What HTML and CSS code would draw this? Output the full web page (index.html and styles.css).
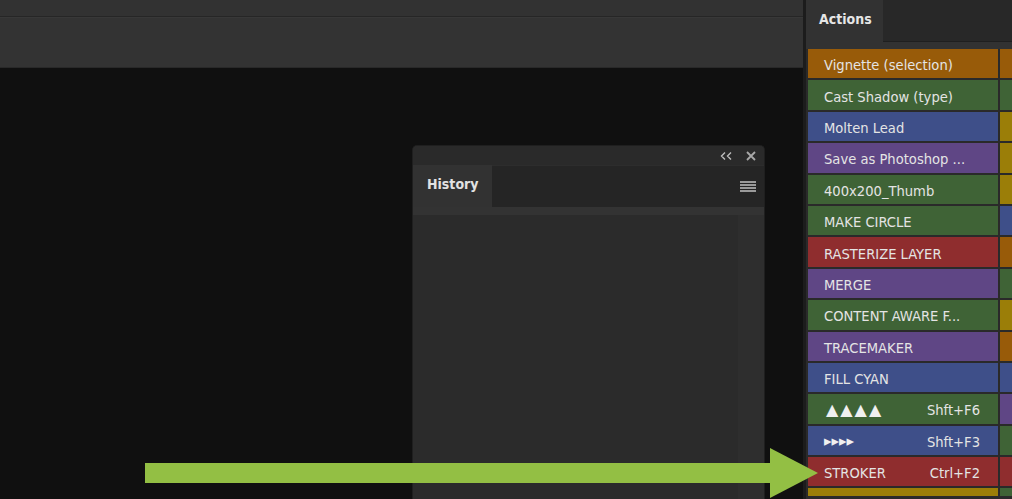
FILE: index.html
```html
<!DOCTYPE html>
<html>
<head>
<meta charset="utf-8">
<link rel="stylesheet" href="styles.css">
</head>
<body>
<div class="app">
  <div class="workspace">
    <div class="menubar"></div>
    <div class="optionsbar"></div>
    <div class="canvas">
      <div class="history">
        <div class="hist-head">
          <svg class="collapse" width="13" height="8" viewBox="0 0 13 8"><path d="M5 0.5 L1.5 4 L5 7.5 M11 0.5 L7.5 4 L11 7.5" stroke="#bdbdbd" stroke-width="1.4" fill="none"/></svg>
          <svg class="close" width="10" height="10" viewBox="0 0 10 10"><path d="M1 1 L9 9 M9 1 L1 9" stroke="#a8a8a8" stroke-width="1.8"/></svg>
        </div>
        <div class="hist-tabs">
          <div class="tab">History</div>
          <div class="tab-rest">
            <svg class="menu" width="16" height="12" viewBox="0 0 16 12"><path d="M0 1h16M0 4h16M0 7h16M0 10h16" stroke="#9a9a9a" stroke-width="2"/></svg>
          </div>
        </div>
        <div class="hist-strip"></div>
        <div class="hist-body">
          <div class="hist-list"></div>
          <div class="hist-scroll"></div>
        </div>
      </div>
    </div>
  </div>
  <div class="dock">
    <div class="dock-tabs">
      <div class="dtab">Actions</div>
      <div class="dtab-rest"></div>
    </div>
    <div class="dock-gap"></div>
    <div class="rows">
      <div class="row"><div class="cell orange">Vignette (selection)</div><div class="cell2 orange"></div></div>
      <div class="row"><div class="cell green">Cast Shadow (type)</div><div class="cell2 green"></div></div>
      <div class="row"><div class="cell blue">Molten Lead</div><div class="cell2 yellow"></div></div>
      <div class="row"><div class="cell purple">Save as Photoshop ...</div><div class="cell2 yellow"></div></div>
      <div class="row"><div class="cell green">400x200_Thumb</div><div class="cell2 yellow"></div></div>
      <div class="row"><div class="cell green">MAKE CIRCLE</div><div class="cell2 blue"></div></div>
      <div class="row"><div class="cell red">RASTERIZE LAYER</div><div class="cell2 orange"></div></div>
      <div class="row"><div class="cell purple">MERGE</div><div class="cell2 green"></div></div>
      <div class="row"><div class="cell green">CONTENT AWARE F...</div><div class="cell2 yellow"></div></div>
      <div class="row"><div class="cell purple">TRACEMAKER</div><div class="cell2 orange"></div></div>
      <div class="row"><div class="cell blue">FILL CYAN</div><div class="cell2 blue"></div></div>
      <div class="row"><div class="cell green"><span class="tri-up">▲▲▲▲</span><span class="key">Shft+F6</span></div><div class="cell2 purple"></div></div>
      <div class="row"><div class="cell blue"><span class="tri-right">▸▸▸▸</span><span class="key">Shft+F3</span></div><div class="cell2 green"></div></div>
      <div class="row"><div class="cell red">STROKER<span class="key">Ctrl+F2</span></div><div class="cell2 red"></div></div>
      <div class="row last"><div class="cell yellow"></div><div class="cell2 green"></div></div>
    </div>
  </div>
  <svg class="arrow" width="1012" height="499" viewBox="0 0 1012 499">
    <rect x="145" y="463" width="627" height="20" fill="#93bf44"/>
    <polygon points="770,448 818,473 770,498" fill="#93bf44"/>
  </svg>
</div>
</body>
</html>
```

FILE: styles.css
```css
* { box-sizing: border-box; }
html, body { margin: 0; padding: 0; }
body {
  width: 1012px;
  height: 499px;
  overflow: hidden;
  background: #101010;
  font-family: "DejaVu Sans Condensed", "DejaVu Sans", sans-serif;
}
.app {
  position: relative;
  display: flex;
  width: 1012px;
  height: 499px;
  overflow: hidden;
}
.workspace {
  width: 803px;
  display: flex;
  flex-direction: column;
}
.menubar {
  height: 17px;
  background: #323232;
  border-bottom: 1px solid #262626;
}
.optionsbar {
  height: 51px;
  background: #333333;
  border-top: 1px solid #383838;
  border-bottom: 1px solid #292929;
}
.canvas {
  flex: 1;
  position: relative;
  background: #101010;
}
.history {
  position: absolute;
  left: 412px;
  top: 77px;
  width: 353px;
  height: 354px;
  background: #2b2b2b;
  border: 1px solid #1f1f1f;
  border-bottom: none;
  border-radius: 5px 5px 0 0;
  display: flex;
  flex-direction: column;
  overflow: hidden;
}
.hist-head {
  height: 19px;
  background: #2a2a2a;
  display: flex;
  align-items: center;
  justify-content: flex-end;
  gap: 13px;
  padding-right: 8px;
}
.hist-tabs {
  height: 42px;
  display: flex;
}
.tab {
  width: 79px;
  background: #323232;
  color: #e2e2e2;
  font-weight: bold;
  font-size: 14px;
  padding-left: 14px;
  padding-bottom: 4px;
  display: flex;
  align-items: center;
}
.tab-rest {
  flex: 1;
  background: #252525;
  border-top: 1px solid #2d2d2d;
  display: flex;
  align-items: center;
  justify-content: flex-end;
  padding-right: 8px;
}
.hist-strip {
  height: 8px;
  background: #333333;
}
.hist-body {
  flex: 1;
  display: flex;
}
.hist-list {
  flex: 1;
  background: #2b2b2b;
}
.hist-scroll {
  width: 26px;
  background: #2e2e2e;
}
.dock {
  width: 209px;
  background: #2c2c2c;
  border-left: 3px solid #1c1c1c;
  display: flex;
  flex-direction: column;
  overflow: hidden;
}
.dock-tabs {
  height: 42px;
  display: flex;
  flex-shrink: 0;
}
.dtab {
  width: 77px;
  background: #323232;
  color: #e6e6e6;
  font-weight: bold;
  font-size: 14px;
  padding-left: 13px;
  display: flex;
  align-items: center;
  padding-bottom: 5px;
}
.dtab-rest {
  flex: 1;
  background: #282828;
  border-bottom: 1px solid #1f1f1f;
}
.dock-gap {
  height: 7px;
  background: #323232;
  flex-shrink: 0;
}
.rows {
  padding-left: 2px;
  background: #2a2a2a;
  flex: 1;
  min-height: 0;
  overflow: hidden;
}
.row {
  display: flex;
  height: 29.4px;
  margin-bottom: 2px;
}
.row.last { height: 8px; margin-bottom: 0; }
.cell {
  width: 190px;
  flex-shrink: 0;
  display: flex;
  align-items: center;
  padding: 2px 18px 0 16px;
  color: #e4e4e4;
  font-size: 14.6px;
  white-space: nowrap;
}
.cell2 {
  margin-left: 2px;
  width: 20px;
  flex-shrink: 0;
}
.key { margin-left: auto; }
.tri-up {
  font-family: "DejaVu Sans", sans-serif;
  font-size: 16px;
  letter-spacing: 2px;
  color: #f0f0f0;
  margin-left: 2px;
}
.tri-right {
  font-family: "DejaVu Sans", sans-serif;
  font-size: 15px;
  letter-spacing: 0;
  color: #f0f0f0;
}
.orange { background: #985b09; }
.green { background: #3f6336; }
.blue { background: #3e4f89; }
.purple { background: #5f4685; }
.red { background: #8f2d2e; }
.yellow { background: #9b7e08; }
.arrow {
  position: absolute;
  left: 0;
  top: 0;
  pointer-events: none;
}
```
